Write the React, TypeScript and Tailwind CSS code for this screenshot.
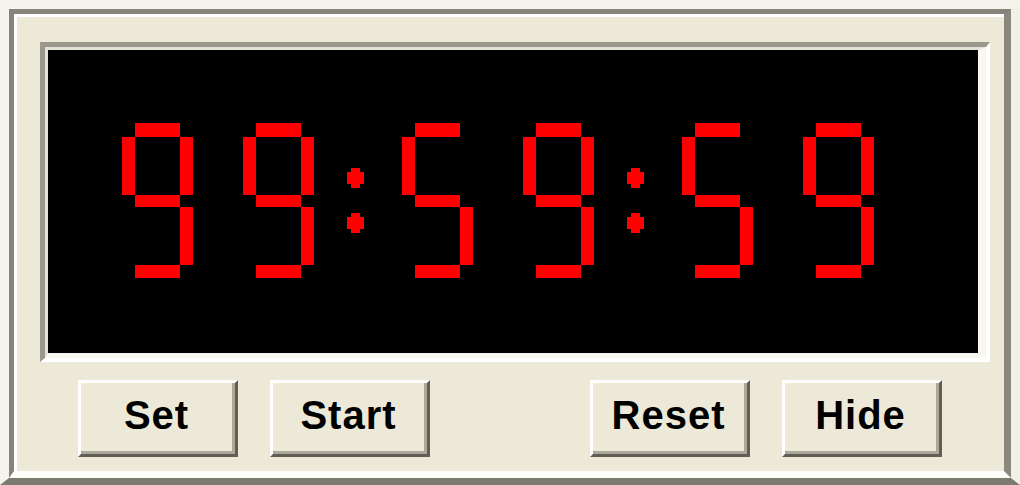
const ON = "#ff0000";

// segment rects for a 71x155 pixel-style 7-seg digit
const SEGMENTS: Record<string, [number, number, number, number]> = {
  a: [13, 0, 45, 14],
  b: [58, 14, 13, 58],
  c: [58, 84, 13, 58],
  d: [13, 142, 45, 13],
  e: [0, 84, 13, 58],
  f: [0, 14, 13, 58],
  g: [13, 72, 45, 12],
};

const DIGIT_SEGS: Record<string, string> = {
  "5": "afgcd",
  "9": "abcdfg",
};

const Digit = ({ value }: { value: string }) => (
  <svg width={71} height={155} viewBox="0 0 71 155" className="shrink-0">
    {DIGIT_SEGS[value].split("").map((s) => {
      const [x, y, w, h] = SEGMENTS[s];
      return <rect key={s} x={x} y={y} width={w} height={h} fill={ON} />;
    })}
  </svg>
);

const Colon = () => (
  <svg width={88} height={155} viewBox="0 0 88 155" className="shrink-0">
    {[45, 90].map((y) => (
      <g key={y} fill={ON}>
        <rect x={37} y={y} width={9} height={20} />
        <rect x={33} y={y + 4} width={17} height={12} />
      </g>
    ))}
  </svg>
);

const Button = ({ label }: { label: string }) => (
  <button
    type="button"
    className="w-[160px] h-[77px] border-t-[3px] border-l-[3px] border-b-[3px] border-r-[3px] border-t-white border-l-white border-b-[#5f5d55] border-r-[#5f5d55] bg-[#ece9d8]"
  >
    <div className="w-full h-full flex items-center justify-center pb-1 border-b-[3px] border-r-[3px] border-b-[#aca899] border-r-[#aca899] text-[40px] font-bold tracking-[1px] text-black font-['Liberation_Sans',Arial,sans-serif]">
      {label}
    </div>
  </button>
);

export default function App() {
  return (
    <div className="w-[1020px] h-[485px] border-t-[9px] border-l-[9px] border-r-[9px] border-b-[7px] border-t-[#f5f4ec] border-l-[#f5f4ec] border-r-[#f2f1e8] border-b-[#7d7b70] bg-[#ece9d8]">
      <div className="w-full h-full border-t-[5px] border-l-[5px] border-r-[7px] border-b-[7px] border-t-[#85837a] border-l-[#85837a] border-r-[#8a887d] border-b-[#fdfdf9]">
        <div className="w-full h-full border-t-[3px] border-l-[3px] border-white bg-[#ece9d8] pl-[23px] pt-[25px] pr-[14px] flex flex-col">
          <div className="w-[950px] h-[320px] border-t-[5px] border-l-[5px] border-b-[4px] border-r-[4px] border-t-[#9a988c] border-l-[#9a988c] border-b-white border-r-white">
            <div className="w-full h-full border-t-[3px] border-l-[3px] border-b-[5px] border-r-[8px] border-t-[#e4e2d6] border-l-[#e4e2d6] border-b-[#f8f7f0] border-r-[#f8f7f0]">
              <div className="w-full h-full bg-black flex pl-[74px] pt-[73px]">
                <Digit value="9" />
                <div className="w-[50px] shrink-0" />
                <Digit value="9" />
                <Colon />
                <Digit value="5" />
                <div className="w-[50px] shrink-0" />
                <Digit value="9" />
                <Colon />
                <Digit value="5" />
                <div className="w-[50px] shrink-0" />
                <Digit value="9" />
              </div>
            </div>
          </div>
          <div className="flex mt-[18px] pl-[38px]">
            <div className="flex gap-[32px]">
              <Button label="Set" />
              <Button label="Start" />
            </div>
            <div className="flex gap-[32px] ml-[160px]">
              <Button label="Reset" />
              <Button label="Hide" />
            </div>
          </div>
        </div>
      </div>
    </div>
  );
}
